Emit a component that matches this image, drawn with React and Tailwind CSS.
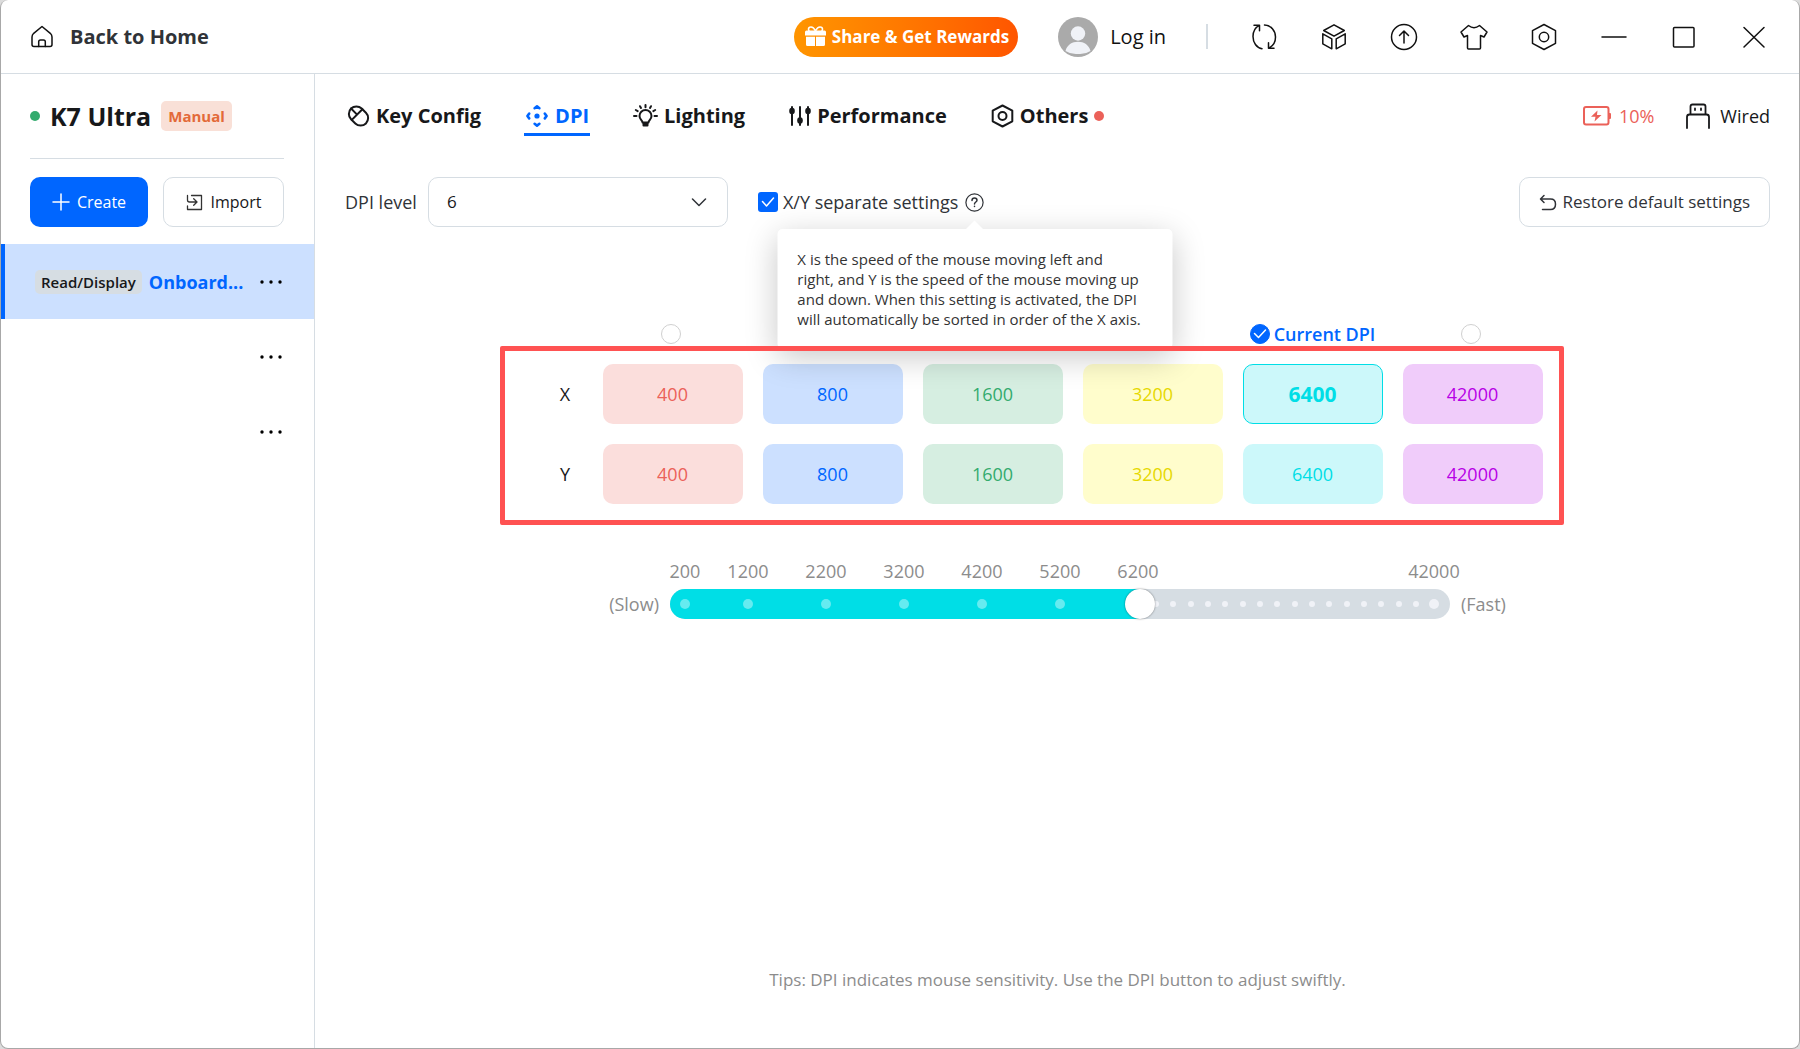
const TABS = [
  { label: 'Key Config', icon: MouseIcon },
  { label: 'DPI', icon: DpiIcon, active: true },
  { label: 'Lighting', icon: BulbIcon },
  { label: 'Performance', icon: SlidersIcon },
  { label: 'Others', icon: NutIcon, dot: true },
];

const LEVELS = [
  { value: '400', style: 'bg-[#fbdedc] text-[#eb6159]' },
  { value: '800', style: 'bg-[#cce0ff] text-[#0066ff]' },
  { value: '1600', style: 'bg-[#d6eee1] text-[#33ab6e]' },
  { value: '3200', style: 'bg-[#fffdcc] text-[#e6d800]' },
  { value: '6400', style: 'bg-[#ccf8fa] text-[#00dee6]', current: true },
  { value: '42000', style: 'bg-[#f0ccfa] text-[#b700e6]' },
];

const TRACK = 780;
const TICKS = [
  { label: '200', at: 15 },
  { label: '1200', at: 78 },
  { label: '2200', at: 156 },
  { label: '3200', at: 234 },
  { label: '4200', at: 312 },
  { label: '5200', at: 390 },
  { label: '6200', at: 468, hidden: true },
  { label: '42000', at: 764, end: true },
];
const MINOR = Array.from({ length: 16 }, (_, i) => 486 + i * (260 / 15));
const pct = (n) => `${(n / TRACK) * 100}%`;

function Svg({ w, h, sw = 1.5, children, className = '' }) {
  return (
    <svg width={w} height={h} viewBox={`0 0 ${w} ${h}`} fill="none" stroke="currentColor" strokeWidth={sw} strokeLinecap="round" strokeLinejoin="round" className={`shrink-0 ${className}`} aria-hidden="true">
      {children}
    </svg>
  );
}

function MouseIcon() {
  return (
    <Svg w={24} h={24} sw={2}>
      <g transform="translate(12.500 12) rotate(-45)">
        <rect x="-7.500" y="-10.500" width="15" height="21" rx="7.500" />
        <path d="M-7.500 -2H7.500M0 -10.500V-2" />
      </g>
    </Svg>
  );
}
function DpiIcon() {
  return (
    <Svg w={24} h={24} sw={2.6}>
      <circle cx="12" cy="12" r="2.600" fill="currentColor" stroke="none" />
      <path d="M9.600 4.200 12 2.400l2.400 1.800M9.600 19.800l2.400 1.800 2.400-1.800M4.200 9.600 2.400 12l1.800 2.400M19.800 9.600l1.800 2.400-1.800 2.400" />
    </Svg>
  );
}
function BulbIcon() {
  return (
    <Svg w={25} h={24} sw={2}>
      <path d="M9.500 18.500c0-2-3-3-3-6.500a6 6 0 0 1 12 0c0 3.500-3 4.500-3 6.500z" />
      <path d="M9.500 19h6v2.500a1 1 0 0 1-1 1h-4a1 1 0 0 1-1-1z" fill="currentColor" stroke="none" />
      <path d="M12.500 1v2.200M7 2.200l1 1.800M18 2.200 17 4M2.800 6l1.900 1.100M22.200 6l-1.900 1.100M1 12h2.500M24 12h-2.500" />
    </Svg>
  );
}
function SlidersIcon() {
  return (
    <Svg w={22} h={20} sw={2}>
      <path d="M3 1v18M11 1v18M19 1v18" />
      <g fill="currentColor" stroke="none">
        <ellipse cx="3" cy="5" rx="2.800" ry="3.200" />
        <ellipse cx="11" cy="14.500" rx="2.800" ry="3.200" />
        <ellipse cx="19" cy="5" rx="2.800" ry="3.200" />
      </g>
    </Svg>
  );
}
function NutIcon() {
  return (
    <Svg w={23} h={24} sw={2}>
      <path d="m11.500 1.500 9.800 5.200v10.600l-9.800 5.200-9.800-5.200V6.700z" />
      <circle cx="11.500" cy="12" r="4" />
    </Svg>
  );
}
function MoreIcon() {
  return (
    <svg width="22" height="4" viewBox="0 0 22 4" fill="currentColor" aria-hidden="true">
      <circle cx="2" cy="2" r="1.700" /><circle cx="11" cy="2" r="1.700" /><circle cx="20" cy="2" r="1.700" />
    </svg>
  );
}

const WINDOW_ACTIONS = [
  { label: 'Refresh', art: <path d="M4 2.200h5.500v5.500M9.300 2.300C5 4.500 3 9 3 13.500c0 6 3.500 11.200 9 12.200M24 25.200h-5.500v-5.500M18.700 25.100C23 23 25.500 18.500 25.500 14c0-6-4.500-11.700-11-12" /> },
  { label: 'Modules', art: <path d="m14 1.800 10.300 5.700L14 13.200 3.700 7.500zM2.800 10.800l9 5v10l-9-5zM25.200 10.800l-9 5v10l9-5z" /> },
  { label: 'Update', art: <><circle cx="14" cy="14" r="12.500" /><path d="M14 20V8.500M9.500 12.500 14 8l4.500 4.500" /></> },
  { label: 'Theme', art: <path d="M8.500 2.500 1 9l3 5 3.500-1.500V25q0 1 1 1h11q1 0 1-1V12.500L24 14l3-5-7.500-6.500q-5.500 4.500-11 0z" /> },
  { label: 'Settings', art: <><path d="m14 1.500 11.500 6.200v12.600L14 26.500 2.500 20.300V7.700z" /><circle cx="14" cy="14" r="4.700" /></> },
  { label: 'Minimize', art: <path d="M2 14h24" /> },
  { label: 'Maximize', art: <rect x="3.500" y="4.500" width="20.500" height="19.500" rx="1" /> },
  { label: 'Close', art: <path d="M4 4.500l20 19.500M24 4.500 4 24" /> },
];

function TopBar() {
  return (
    <header className="flex h-[74px] items-center border-b border-[#d6dde3] pr-[31px] pl-[30px]">
      <button className="flex items-center gap-[17px] text-[20px] leading-7 font-bold text-[#303338]">
        <Svg w={22} h={23} className="text-[#111]">
          <path d="m11 1.500-8.300 6.800Q1 9.800 1 12v7.500q0 2 2 2h16q2 0 2-2V12q0-2.200-1.700-3.700z" />
          <path d="M7.700 21.500v-4.700q0-1.800 1.800-1.800h3q1.800 0 1.800 1.800v4.700" />
        </Svg>
        Back to Home
      </button>
      <div className="ml-auto flex items-center">
        <button className="mr-10 flex h-10 items-center gap-[6px] rounded-full bg-linear-to-r from-[#ff9500] to-[#ff5500] pr-[9px] pl-[11px] text-[17px] leading-6 font-bold whitespace-nowrap text-white">
          <svg width="21" height="21" viewBox="0 0 21 21" className="shrink-0" aria-hidden="true">
            <path d="M10.500 4.800C9 2 7.500 1 6 1 4.500 1 3.500 2 3.500 3.200c0 .8.400 1.500 1 1.800M10.500 4.800C12 2 13.500 1 15 1c1.500 0 2.500 1 2.500 2.200 0 .8-.4 1.500-1 1.800" fill="none" stroke="#fff" strokeWidth="1.600" />
            <path d="M1.500 4.500h18a1.500 1.500 0 0 1 1.500 1.500v3.500H0V6a1.500 1.500 0 0 1 1.500-1.500zM1 10.800h9V20H2.500A1.500 1.500 0 0 1 1 18.500zM11 10.800h9v7.700a1.500 1.500 0 0 1-1.500 1.500H11z" fill="#fff" />
          </svg>
          Share &amp; Get Rewards
        </button>
        <button className="mr-10 flex items-center gap-3 text-[20px] leading-7 text-[#111]">
          <svg width="40" height="40" viewBox="0 0 40 40" aria-hidden="true">
            <circle cx="20" cy="20" r="20" fill="#aaa" />
            <circle cx="20" cy="16.500" r="7.200" fill="#f0f2f7" />
            <path d="M7.500 34c1.500-6 6.500-9.200 12.500-9.200S31 28 32.500 34A19 19 0 0 1 20 37 19 19 0 0 1 7.500 34z" fill="#f0f2f7" />
          </svg>
          Log in
        </button>
        <span className="mr-[42px] h-[25px] w-0.5 bg-[#d6dde3]" />
        <div className="flex gap-[42px] text-[#111]">
          {WINDOW_ACTIONS.map((a) => (
            <button key={a.label} aria-label={a.label}>
              <Svg w={28} h={28}>{a.art}</Svg>
            </button>
          ))}
        </div>
      </div>
    </header>
  );
}

function Sidebar() {
  return (
    <aside className="w-[314px] shrink-0 border-r border-[#d6dde3]">
      <div className="mr-[30px] ml-[29px]">
        <div className="flex h-[85px] items-center border-b border-[#d6dde3]">
          <span className="mr-[10px] size-[10px] rounded-full bg-[#33ab6e]" />
          <h1 className="mr-[10px] text-[25px] leading-8 font-bold text-[#17181a]">K7 Ultra</h1>
          <span className="flex h-[30px] items-center rounded-[5px] bg-[#f9e0d7] px-[7px] text-[15px] leading-5 font-bold text-[#e36a39]">Manual</span>
        </div>
        <div className="mt-[18px] grid grid-cols-[118px_1fr] gap-[15px] text-[16px] leading-6">
          <button className="flex h-[50px] items-center justify-center gap-[7px] rounded-[10px] bg-[#0066ff] text-white">
            <Svg w={18} h={18}><path d="M9 1v16M1 9h16" /></Svg>
            Create
          </button>
          <button className="flex h-[50px] items-center justify-center gap-2 rounded-[10px] border border-[#d6dde3] text-[#17181a]">
            <Svg w={17} h={17} sw={1.3} className="text-[#333]">
              <path d="M1.500 1.500V6q0 2 2 2h7M7.700 4.800 11 8l-3.300 3.300M5.500 1.500h10v14h-14V12" />
            </Svg>
            Import
          </button>
        </div>
      </div>
      <ul className="mt-[17px]">
        <li className="flex h-[75px] items-center border-l-4 border-[#0066ff] bg-[#cce0ff] pr-8 pl-[30px]">
          <span className="rounded-[5px] bg-[#d6dde3] px-[6px] py-0.5 text-[15px] leading-5 font-semibold text-[#17181a]">Read/Display</span>
          <span className="ml-[7px] text-[18px] leading-6 font-bold text-[#0066ff]">Onboard...</span>
          <button aria-label="Profile options" className="ml-auto"><MoreIcon /></button>
        </li>
        {[1, 2].map((n) => (
          <li key={n} className="flex h-[75px] items-center justify-end pr-8">
            <button aria-label="Profile options"><MoreIcon /></button>
          </li>
        ))}
      </ul>
    </aside>
  );
}

function TabBar() {
  return (
    <div className="flex items-center justify-between">
      <nav className="flex gap-[42px]">
        {TABS.map(({ label, icon: Icon, active, dot }) => (
          <button key={label} className={`flex h-10 items-center gap-[6px] border-b-3 px-[1px] pt-[3px] text-[20px] leading-7 font-bold ${active ? 'border-[#0066ff] text-[#0066ff]' : 'border-transparent text-[#17181a]'}`}>
            <Icon />
            {label}
            {dot && <span className="size-[10px] rounded-full bg-[#eb6159]" />}
          </button>
        ))}
      </nav>
      <div className="flex items-center text-[18px] leading-6">
        <svg width="28" height="20" viewBox="0 0 28 20" className="text-[#eb6159]" aria-hidden="true">
          <rect x="1" y="1" width="24.500" height="17.500" rx="2" fill="none" stroke="currentColor" strokeWidth="2" />
          <path d="M26 7h1q1 0 1 1v4q0 1-1 1h-1zM14.500 4.500 8 10.800h4.500L11.500 15.500l7-6.500H14z" fill="currentColor" />
        </svg>
        <span className="ml-2 text-[#eb6159]">10%</span>
        <Svg w={24} h={26} className="ml-[32px] text-[#17181a]" sw={1.8}>
          <path d="M4.500 11.500V3.500q0-2 2-2h11q2 0 2 2v8M1 25V14q0-2.500 2.500-2.500h17Q23 11.500 23 14v11" />
          <path d="M9 5.500v1.500M15 5.500v1.500" />
        </Svg>
        <span className="ml-[10px] text-[#17181a]">Wired</span>
      </div>
    </div>
  );
}

function Tooltip() {
  return (
    <div role="tooltip" className="absolute top-full left-1/2 z-10 mt-[17px] w-[395px] -translate-x-1/2 rounded-[5px] bg-white p-5 text-[15px] leading-5 whitespace-nowrap text-[#333] shadow-[0_8px_32px_rgba(0,0,0,0.22)]">
      <span className="absolute -top-[6px] left-1/2 size-3 -translate-x-1/2 rotate-45 bg-white" />
      X is the speed of the mouse moving left and<br />
      right, and Y is the speed of the mouse moving up<br />
      and down. When this setting is activated, the DPI<br />
      will automatically be sorted in order of the X axis.
    </div>
  );
}

function SettingsRow() {
  return (
    <div className="mt-[41px] flex items-center text-[18px] leading-6 text-[#303338]">
      <label htmlFor="level">DPI level</label>
      <div className="relative ml-[11px] w-[300px]">
        <select id="level" defaultValue="6" className="h-[50px] w-full appearance-none rounded-[10px] border border-[#d6dde3] bg-white px-[18px] text-[17px] text-[#17181a]">
          <option>6</option>
        </select>
        <Svg w={16} h={9} className="pointer-events-none absolute top-[21px] right-[21px]"><path d="m1.500 1 6.500 6.500L14.500 1" /></Svg>
      </div>
      <span className="relative ml-[30px] flex size-5">
        <input id="separate" type="checkbox" defaultChecked className="size-5 appearance-none rounded-[3px] bg-[#0066ff]" />
        <Svg w={20} h={20} className="pointer-events-none absolute inset-0 text-white"><path d="m4.500 9.500 4 4.500 7-8" /></Svg>
      </span>
      <label htmlFor="separate" className="ml-[5px]">X/Y separate settings</label>
      <span className="relative ml-[7px] flex">
        <button aria-label="About separate settings">
          <Svg w={19} h={19} sw={1.2}>
            <circle cx="9.500" cy="9.500" r="8.600" />
            <path d="M7 7.500Q7 5 9.500 5t2.500 2.300c0 1.700-2.500 1.700-2.500 3.700M9.500 13.300v.3" strokeWidth="1.500" />
          </Svg>
        </button>
        <Tooltip />
      </span>
      <button className="ml-auto flex h-[50px] items-center gap-[6px] rounded-[10px] border border-[#d6dde3] px-[19px] text-[17px] leading-6">
        <Svg w={18} h={17}><path d="M5 1.500 1.500 5 5 8.500M2 5h9.500q5 0 5 5.200t-5 5.300h-8" /></Svg>
        Restore default settings
      </button>
    </div>
  );
}

const COLUMNS = 'grid grid-cols-[83px_repeat(6,1fr)] gap-x-5 pr-[21px]';

function LevelTable() {
  return (
    <div className="mt-[97px] pr-[52px]">
      <div className="mx-auto max-w-[1064px]">
        <div className={`${COLUMNS} h-[22px]`}>
          <span />
          {LEVELS.map((l) => (
            <label key={l.value} className="flex h-5 items-center justify-center gap-1 text-[18px] leading-5 font-semibold whitespace-nowrap text-[#0066ff]">
              <span className="relative flex">
                <input type="radio" name="current" aria-label={`Use ${l.value}`} defaultChecked={l.current} className="size-5 appearance-none rounded-full border border-[#d0d0d0] bg-white checked:border-[#0066ff] checked:bg-[#0066ff]" />
                {l.current && <Svg w={20} h={20} className="pointer-events-none absolute inset-0 text-white"><path d="m4.500 9.500 4 4 7-7.500" /></Svg>}
              </span>
              <span>{l.current && 'Current DPI'}</span>
            </label>
          ))}
        </div>
        <div className={`${COLUMNS} relative gap-y-5 pt-[18px] pb-[21px]`}>
          {['X', 'Y'].map((axis) => (
            <div key={axis} className="contents">
              <span className="self-center pl-12 text-center text-[18px] leading-6 text-[#17181a]">{axis}</span>
              {LEVELS.map((l) => (
                <input
                  key={l.value}
                  aria-label={`${axis} ${l.value}`}
                  defaultValue={l.value}
                  className={`h-[60px] w-full min-w-0 rounded-[10px] text-center leading-7 ${l.style} ${l.current && axis === 'X' ? 'border border-[#00dee6] text-[21px] font-bold' : 'text-[18px]'}`}
                />
              ))}
            </div>
          ))}
          <div className="pointer-events-none absolute inset-0 z-20 rounded-[2px] border-5 border-[#ff5252]" />
        </div>
      </div>
    </div>
  );
}

function SpeedSlider() {
  return (
    <div className="mt-[34px] flex items-end justify-center gap-[11px] text-[18px] leading-[30px] text-[#8c8c8c]">
      <span>(Slow)</span>
      <div className="w-full max-w-[780px]">
        <div className="relative h-[30px] leading-6">
          {TICKS.map((t) => (
            <span key={t.label} className="absolute top-0 -translate-x-1/2" style={{ left: pct(t.at) }}>{t.label}</span>
          ))}
        </div>
        <div className="relative flex h-[30px] items-center overflow-visible rounded-full bg-[#d6dde3]">
          <div className="h-full rounded-full bg-[#00dee6]" style={{ width: pct(480) }} />
          {MINOR.map((m) => (
            <span key={m} className="absolute size-[6px] -translate-x-1/2 rounded-full bg-[#f0f2f7]" style={{ left: pct(m) }} />
          ))}
          {TICKS.filter((t) => !t.hidden).map((t) => (
            <span key={t.label} className={`absolute size-[10px] -translate-x-1/2 rounded-full ${t.end ? 'bg-[#f0f2f7]' : 'bg-[#66ebf0]'}`} style={{ left: pct(t.at) }} />
          ))}
          <span className="absolute size-[30px] -translate-x-1/2 rounded-full bg-white shadow-[0_0_2px_rgba(0,0,0,0.5)]" style={{ left: pct(470) }} />
          <input type="range" aria-label="DPI speed" min="200" max="42000" defaultValue="6400" className="absolute inset-0 h-full w-full opacity-0" />
        </div>
      </div>
      <span>(Fast)</span>
    </div>
  );
}

export default function App() {
  return (
    <div className="min-h-screen bg-[#dcdcdc] font-['Open_Sans',sans-serif]">
      <div className="flex min-h-screen flex-col rounded-[8px] border border-t-0 border-[#a8a8a8] bg-white">
        <TopBar />
        <div className="flex flex-1">
          <Sidebar />
          <main className="flex min-w-0 flex-1 flex-col pt-[22px] pr-[29px] pl-[30px]">
            <TabBar />
            <SettingsRow />
            <LevelTable />
            <SpeedSlider />
            <p className="mt-auto pb-[56px] text-center text-[17px] leading-6 text-[#8c8c8c]">
              Tips: DPI indicates mouse sensitivity. Use the DPI button to adjust swiftly.
            </p>
          </main>
        </div>
      </div>
    </div>
  );
}
